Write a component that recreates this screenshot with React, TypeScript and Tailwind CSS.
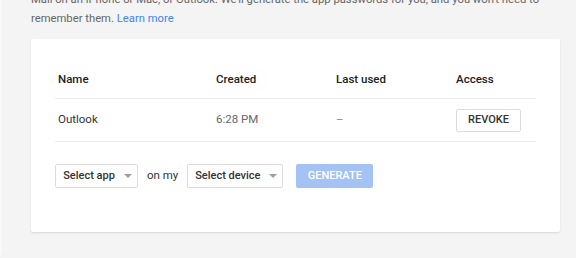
function Caret() {
  return (
    <svg width="8" height="4" viewBox="0 0 8 4" className="ml-[9px]">
      <path d="M0 0h8L4 4z" fill="#9e9e9e" />
    </svg>
  );
}

function SelectButton({ label, width }: { label: string; width: string }) {
  return (
    <button
      className={`flex h-[24px] items-center justify-center rounded-[2px] border border-[#dcdcdc] bg-white pl-[2px] text-[11px] font-medium text-[#333] ${width}`}
    >
      {label}
      <Caret />
    </button>
  );
}

export default function App() {
  return (
    <div className="h-[258px] w-[576px] overflow-hidden bg-[#f4f4f4] font-['Roboto',sans-serif]">
      <div className="h-[255px] overflow-hidden border-l-[2px] border-[#f8f8f8] pl-[29px]">
        {/* Intro text */}
        <p className="-mt-[10px] w-[530px] text-[11.25px] leading-[19px] text-[#666]">
          Mail on an iPhone or Mac, or Outlook. We'll generate the app passwords for you, and you won't need to
          <br />
          remember them. <span className="text-[#4285f4]">Learn more</span>
        </p>

        {/* Card */}
        <div className="mt-[11px] w-[529px] rounded-[2px] bg-white px-[24px] pb-[44px] pt-[22px] shadow-[0_1px_2px_rgba(0,0,0,0.12)]">
          <div className="grid grid-cols-[158px_120px_120px_1fr] border-b border-[#ebebeb] pl-[3px] text-[11.5px] font-medium text-[#222]">
            <div className="flex h-[37px] items-center">Name</div>
            <div className="flex h-[37px] items-center">Created</div>
            <div className="flex h-[37px] items-center">Last used</div>
            <div className="flex h-[37px] items-center">Access</div>
          </div>
          <div className="grid grid-cols-[158px_120px_120px_1fr] border-b border-[#ebebeb] pl-[3px] text-[11.5px]">
            <div className="flex h-[42px] items-center text-[#333]">Outlook</div>
            <div className="flex h-[42px] items-center text-[#666]">6:28 PM</div>
            <div className="flex h-[42px] items-center text-[#888]">–</div>
            <div className="flex h-[42px] items-center">
              <button className="flex h-[23px] w-[65px] items-center justify-center rounded-[2px] border border-[#dcdcdc] bg-white text-[11px] font-medium text-[#333]">
                REVOKE
              </button>
            </div>
          </div>

          <div className="mt-[22px] flex items-center text-[11.5px]">
            <SelectButton label="Select app" width="w-[83px]" />
            <span className="mx-[9px] text-[#333]">on my</span>
            <SelectButton label="Select device" width="w-[96px]" />
            <button className="ml-[13px] flex h-[24px] w-[77px] items-center justify-center rounded-[2px] bg-[#a4c2f4] text-[11px] font-medium text-white">
              GENERATE
            </button>
          </div>
        </div>
      </div>
    </div>
  );
}
